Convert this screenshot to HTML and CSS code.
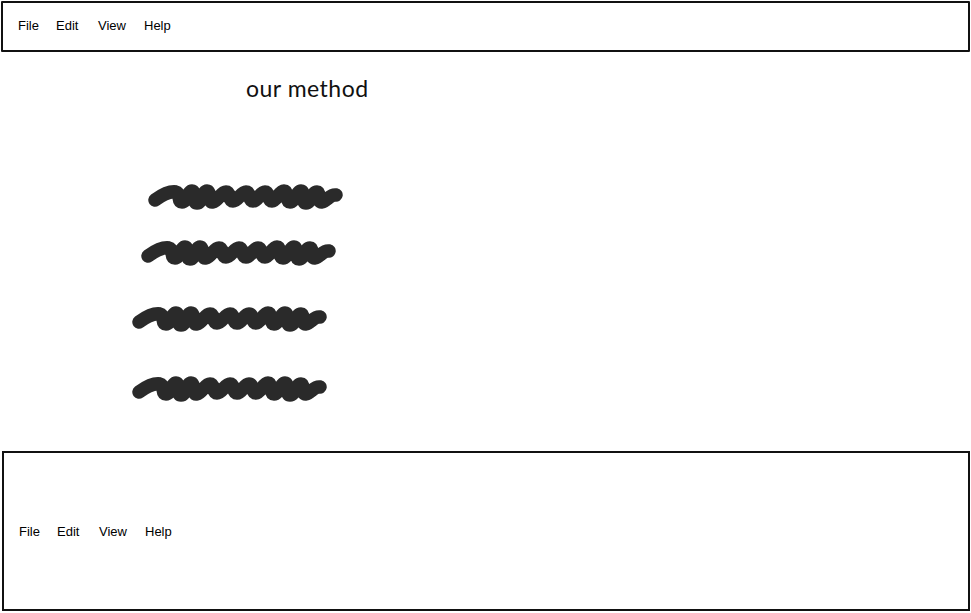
FILE: index.html
```html
<!DOCTYPE html>
<html>
<head>
<meta charset="utf-8">
<link rel="stylesheet" href="styles.css">
</head>
<body>
<div class="page">
  <nav class="menubar">
    <span class="menu-item">File</span>
    <span class="menu-item">Edit</span>
    <span class="menu-item">View</span>
    <span class="menu-item">Help</span>
  </nav>
  <main class="content">
    <h1 class="title">our method</h1>
    <ul class="scribbles">
      <li class="scribble s1"><svg width="200" height="34" viewBox="0 0 200 34"><use href="#scrib"/></svg></li>
      <li class="scribble s2"><svg width="200" height="34" viewBox="0 0 200 34"><use href="#scrib"/></svg></li>
      <li class="scribble s3"><svg width="200" height="34" viewBox="0 0 200 34"><use href="#scrib"/></svg></li>
      <li class="scribble s4"><svg width="200" height="34" viewBox="0 0 200 34"><use href="#scrib"/></svg></li>
    </ul>
  </main>
  <footer class="footbar">
    <span class="menu-item">File</span>
    <span class="menu-item">Edit</span>
    <span class="menu-item">View</span>
    <span class="menu-item">Help</span>
  </footer>
</div>
<svg width="0" height="0" class="defs">
  <defs>
    <path id="scrib" fill="none" stroke="#2a2a2a" stroke-width="13.5" stroke-linecap="round" stroke-linejoin="round"
      d="M7,21 C14,16 22,12 28,13 C33,14 29,23 34,23 C39,23 40,12 44,12 C48,12 44,24 49,24 C54,24 55,12 59,12 C63,12 60,24 65,23 C70,22 73,13 78,13 C83,13 80,22 85,22 C90,22 93,13 98,13 C103,13 100,22 105,22 C110,22 112,13 117,13 C122,13 119,22 124,22 C129,22 131,12 136,12 C141,12 137,23 142,23 C147,23 149,12 153,12 C157,12 153,24 158,24 C163,24 164,13 169,13 C173,13 169,24 174,23 C179,22 182,15 188,16"/>
  </defs>
</svg>
</body>
</html>
```
FILE: styles.css
```css
html, body {
  margin: 0;
  padding: 0;
  background: #fff;
}
.page {
  width: 971px;
  height: 613px;
  display: flex;
  flex-direction: column;
  box-sizing: border-box;
}
.menubar {
  margin: 1px 1px 0 1px;
  height: 45px;
  border: 2px solid #111;
  border-radius: 1px;
  display: flex;
  align-items: center;
  padding-left: 15px;
  padding-bottom: 2px;
  box-sizing: content-box;
}
.menu-item {
  font-family: "Liberation Sans", Arial, sans-serif;
  font-size: 13px;
  color: #000;
}
.menu-item:nth-child(1) { width: 38px; }
.menu-item:nth-child(2) { width: 42px; }
.menu-item:nth-child(3) { width: 46px; }
.content {
  flex: 1;
  display: flex;
  flex-direction: column;
}
.title {
  margin: 22px 0 0 246px;
  font-family: "Lato", "Open Sans", sans-serif;
  font-weight: 400;
  font-size: 23px;
  letter-spacing: 0.5px;
  color: #111;
  line-height: 28px;
}
.scribbles {
  list-style: none;
  margin: 77px 0 0 0;
  padding: 0;
  display: flex;
  flex-direction: column;
}
.scribble {
  height: 34px;
  line-height: 0;
}
.scribble svg { display: block; }
.s1 { margin-left: 148px; }
.s2 { margin-left: 141px; margin-top: 22px; }
.s3 { margin-left: 132px; margin-top: 32px; }
.s4 { margin-left: 132px; margin-top: 36px; }
.footbar {
  margin: 0 1px 2px 2px;
  height: 156px;
  border: 2px solid #111;
  display: flex;
  align-items: center;
  padding-left: 15px;
}
.defs {
  position: absolute;
  width: 0;
  height: 0;
}
```
